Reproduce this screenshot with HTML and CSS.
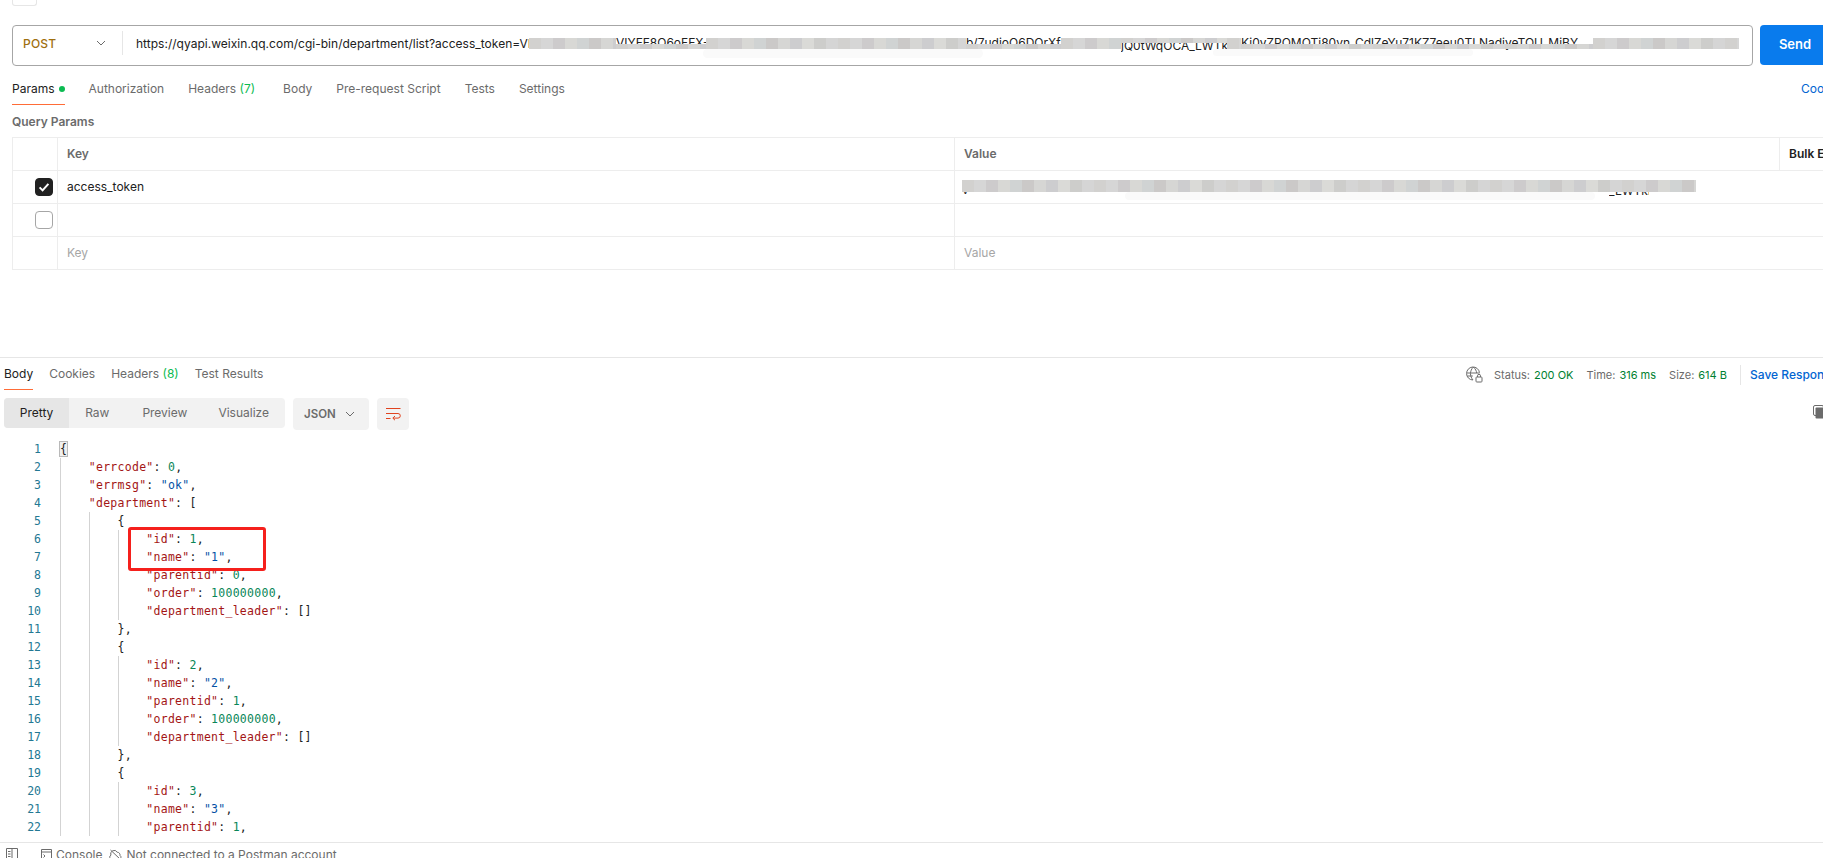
FILE: index.html
```html
<!DOCTYPE html>
<html lang="en">
<head>
<meta charset="utf-8">
<title>Postman</title>
<link rel="stylesheet" href="styles.css">
</head>
<body>
<div class="app">
  <div class="topstrip"><div class="topbox"></div></div>

  <div class="reqline">
    <div class="urlbox">
      <div class="method"><span>POST</span>
        <svg class="chev" viewBox="0 0 10 6" width="10" height="6"><path d="M1 1l4 4 4-4" fill="none" stroke="#6b6b6b" stroke-width="1"/></svg>
      </div>
      <div class="url">https://qyapi.weixin.qq.com/cgi-bin/department/list?access_token=VI</div>
      <span class="frag f1">VIYFF8O6oFEX-1</span>
      <span class="frag f2">b/7udioO6DOrXf</span>
      <span class="frag f3">jQ0tWqOCA_LWTkMq</span>
      <span class="frag f4">Ki0yZPOMOTi80vn_CdlZeYu71KZ7eeu0TLNadjyeTQU_MiBY</span>
      <div class="smear s1"></div>
      <div class="smear s2"></div>
      <div class="mos m1"></div>
      <div class="mos m1b"></div>
      <div class="mos m2"></div>
      <div class="mos m2b"></div>
      <div class="mos m3"></div>
      <div class="mos m3b"></div>
      <div class="mos m4"></div>
      <div class="mos m4b"></div>
      <div class="mos m5"></div>
    </div>
    <div class="send">Send</div>
  </div>

  <div class="tabs req-tabs">
    <div class="tab active">Params<i class="dot"></i></div>
    <div class="tab">Authorization</div>
    <div class="tab tab-wide">Headers <span class="count">(7)</span></div>
    <div class="tab">Body</div>
    <div class="tab">Pre-request Script</div>
    <div class="tab">Tests</div>
    <div class="tab">Settings</div>
    <div class="cookies">Cookies</div>
  </div>

  <div class="qp-title">Query Params</div>

  <div class="ptable">
    <div class="row">
      <div class="c c0"></div><div class="c c1 head">Key</div><div class="c c2 head">Value</div><div class="c c3 head bulk">Bulk Edit</div>
    </div>
    <div class="row">
      <div class="c c0"><span class="cb on"><svg viewBox="0 0 16 16" width="16" height="16"><path d="M3.600 8.400l3 3 5.800-6.600" fill="none" stroke="#fff" stroke-width="2"/></svg></span></div>
      <div class="c c1">access_token</div>
      <div class="c c2 val">
        <div class="smear s3"></div>
        <span class="frag f5">v</span>
        <span class="frag f6">_LWTkMq</span>
        <div class="mos m6"></div>
      </div>
      <div class="c c3"></div>
    </div>
    <div class="row">
      <div class="c c0"><span class="cb"></span></div><div class="c c1"></div><div class="c c2"></div><div class="c c3"></div>
    </div>
    <div class="row">
      <div class="c c0"></div><div class="c c1 ph">Key</div><div class="c c2 ph">Value</div><div class="c c3"></div>
    </div>
  </div>

  <div class="response">
    <div class="resp-head">
      <div class="tabs res-tabs">
        <div class="tab active">Body</div>
        <div class="tab">Cookies</div>
        <div class="tab">Headers <span class="count">(8)</span></div>
        <div class="tab">Test Results</div>
      </div>
      <div class="meta">
        <svg class="globe" viewBox="0 0 17 17" width="17" height="17" fill="none" stroke="#6b6b6b" stroke-width="1">
          <path d="M13.500 6.600A6.500 6.500 0 1 0 6.800 14"/>
          <path d="M1 7h12.500M1.400 10h5.400M7.300 1C3.600 5 3.600 10 7 14M7.300 1c2.200 2 3.200 4 3.400 6"/>
          <rect x="10" y="11" width="6" height="5" rx=".8"/>
          <path d="M11.500 11V9.800a1.500 1.500 0 0 1 3 0V11"/>
        </svg>
        <span class="mk">Status:</span><span class="mv">200 OK</span>
        <span class="mk">Time:</span><span class="mv">316 ms</span>
        <span class="mk">Size:</span><span class="mv">614 B</span>
        <span class="msep"></span>
        <span class="save">Save Response</span>
      </div>
    </div>

    <div class="toolbar">
      <div class="seg">
        <div class="seg-i on">Pretty</div>
        <div class="seg-i">Raw</div>
        <div class="seg-i prev">Preview</div>
        <div class="seg-i vis">Visualize</div>
      </div>
      <div class="fmt"><span>JSON</span>
        <svg viewBox="0 0 10 6" width="10" height="6"><path d="M1 1l4 4 4-4" fill="none" stroke="#6b6b6b" stroke-width="1"/></svg>
      </div>
      <div class="wrap">
        <svg viewBox="0 0 15 14" width="15" height="14" fill="none" stroke="#e0431f" stroke-width="1">
          <path d="M0 1.500h14.500M0 6.500h12a2.300 2.300 0 0 1 0 4.600H7M0 11.500h4.500M9 9l-2.200 2.100L9 13.200"/>
        </svg>
      </div>
      <svg class="copy" viewBox="0 0 14 14" width="14" height="14"><rect x=".5" y=".5" width="10" height="10" rx="1.500" fill="none" stroke="#6b6b6b"/><rect x="2.500" y="2.500" width="11.500" height="11" rx="1" fill="#6b6b6b"/></svg>
    </div>

    <div class="code">
      <i class="guide g1"></i><i class="guide g2"></i>
      <i class="guide g3 g3a"></i><i class="guide g3 g3b"></i><i class="guide g3 g3c"></i>
      <div class="l"><b>1</b><code><span class="match">{</span></code></div>
      <div class="l"><b>2</b><code>    <u>"errcode"</u>: <s>0</s>,</code></div>
      <div class="l"><b>3</b><code>    <u>"errmsg"</u>: <em>"ok"</em>,</code></div>
      <div class="l"><b>4</b><code>    <u>"department"</u>: [</code></div>
      <div class="l"><b>5</b><code>        {</code></div>
      <div class="l"><b>6</b><code>            <u>"id"</u>: <s>1</s>,</code></div>
      <div class="l"><b>7</b><code>            <u>"name"</u>: <em>"1"</em>,</code></div>
      <div class="l"><b>8</b><code>            <u>"parentid"</u>: <s>0</s>,</code></div>
      <div class="l"><b>9</b><code>            <u>"order"</u>: <s>100000000</s>,</code></div>
      <div class="l"><b>10</b><code>            <u>"department_leader"</u>: []</code></div>
      <div class="l"><b>11</b><code>        },</code></div>
      <div class="l"><b>12</b><code>        {</code></div>
      <div class="l"><b>13</b><code>            <u>"id"</u>: <s>2</s>,</code></div>
      <div class="l"><b>14</b><code>            <u>"name"</u>: <em>"2"</em>,</code></div>
      <div class="l"><b>15</b><code>            <u>"parentid"</u>: <s>1</s>,</code></div>
      <div class="l"><b>16</b><code>            <u>"order"</u>: <s>100000000</s>,</code></div>
      <div class="l"><b>17</b><code>            <u>"department_leader"</u>: []</code></div>
      <div class="l"><b>18</b><code>        },</code></div>
      <div class="l"><b>19</b><code>        {</code></div>
      <div class="l"><b>20</b><code>            <u>"id"</u>: <s>3</s>,</code></div>
      <div class="l"><b>21</b><code>            <u>"name"</u>: <em>"3"</em>,</code></div>
      <div class="l"><b>22</b><code>            <u>"parentid"</u>: <s>1</s>,</code></div>
      <div class="redbox"></div>
    </div>
  </div>

  <div class="footer">
    <svg class="fi-side" viewBox="0 0 12 13" width="12" height="13" fill="none" stroke="#6b6b6b"><path d="M.5.500h11v12h-11zM6 .5v12M2 3.500h2.500M2 6h2.500M2 8.500h2.500"/></svg>
    <svg class="fi-con" viewBox="0 0 11 12" width="11" height="12" fill="none" stroke="#6b6b6b"><path d="M.5.500h10v11h-10zM.5 3h10M2.500 5.500l1.500 1.500-1.500 1.500M5 9.500h2"/></svg>
    <span class="ft ft-con">Console</span>
    <svg class="fi-cloud" viewBox="0 0 13 11" width="13" height="11" fill="none" stroke="#6b6b6b"><path d="M3 10H2.500a2 2 0 0 1-.6-3.800 3.500 3.500 0 0 1 6.300-3A2.800 2.800 0 0 1 11 6.500 1.900 1.900 0 0 1 10.500 10zM1.500 1l10 9.500"/></svg>
    <span class="ft">Not connected to a Postman account</span>
  </div>
</div>
</body>
</html>
```

FILE: styles.css
```css
* { box-sizing: border-box; }
html, body { margin: 0; padding: 0; background: #fff; }
body { font-family: Inter, "Liberation Sans", sans-serif; font-size: 12px; color: #212121; overflow: hidden; }
.app { width: 1823px; height: 858px; overflow: hidden; display: flex; flex-direction: column; }

.topstrip { height: 25px; flex: none; padding-left: 12px; }
.topbox { width: 25px; height: 6px; border: 1px solid #e6e6e6; border-top: 0; border-radius: 0 0 3px 3px; }

.reqline { height: 40px; flex: none; display: flex; gap: 7px; padding-left: 12px; }
.urlbox { position: relative; flex: none; width: 1741px; height: 41px; border: 1px solid #a6a6a6; border-radius: 4px; display: flex; align-items: center; padding-bottom: 5px; }
.method { width: 110px; height: 24px; flex: none; display: flex; align-items: center; justify-content: space-between; padding: 0 16px 0 10px; border-right: 1px solid #e6e6e6; color: #a0700f; font-weight: 500; font-size: 12px; letter-spacing: .2px; }
.url { padding-left: 13px; color: #212121; white-space: nowrap; font-size: 12px; letter-spacing: .02px; }

.frag { position: absolute; top: 10px; color: #212121; white-space: nowrap; overflow: hidden; font-size: 12px; line-height: 14px; }
.f1 { left: 603px; width: 90px; }
.f2 { left: 953px; width: 95px; }
.f3 { left: 1108px; width: 106px; top: 13px; }
.f4 { left: 1228px; width: 352px; }
.f5 { left: 7px; top: 12px; width: 6px; }
.f6 { left: 654px; top: 13px; width: 40px; }

.mos { position: absolute; top: 12px; height: 11px;
  background: repeating-linear-gradient(90deg, #d2d1cf 0 12px, #d6d6d6 12px 24px, #cdcbcc 24px 36px, #d8d8d5 36px 48px, #d0d3d3 48px 60px, #cbc9c8 60px 72px, #d6d6d4 72px 84px, #cdcdcf 84px 96px, #dadad7 96px 108px, #cdcdcb 108px 120px, #d5d5d5 120px 132px); }
.m1 { left: 516px; width: 87px; }
.m1b { left: 603px; width: 90px; top: 18px; height: 5px; }
.m2 { left: 693px; width: 260px; }
.m2b { left: 953px; width: 95px; top: 18px; height: 5px; }
.m3 { left: 1048px; width: 60px; }
.m3b { left: 1108px; width: 106px; height: 5px; }
.m4 { left: 1214px; width: 14px; }
.m4b { left: 1228px; width: 352px; top: 18px; height: 5px; }
.m5 { left: 1580px; width: 146px; }
.m6 { left: 7px; top: 9px; width: 734px; height: 12px; }
.smear { position: absolute; background: #fafafa; border-radius: 8px; }
.s1 { left: 690px; top: 23px; width: 280px; height: 9px; }
.s2 { left: 1200px; top: 23px; width: 260px; height: 7px; }
.s3 { left: 170px; top: 21px; width: 470px; height: 8px; }

.send { width: 70px; height: 40px; flex: none; background: #097bed; color: #fff; border-radius: 4px; display: flex; align-items: center; justify-content: center; font-weight: 600; font-size: 13px; padding-bottom: 2px; }

.tabs { display: flex; flex: none; }
.tab { color: #6b6b6b; line-height: 16px; white-space: nowrap; position: relative; }
.tab.active { color: #212121; }
.tab.active::after { content: ""; position: absolute; left: 0; right: 0; height: 1px; background: #ff6c37; }
.count { color: #0cbb52; }
.req-tabs { height: 40px; padding: 16px 0 0 12px; gap: 24px; position: relative; }
.req-tabs .tab.active::after { top: 23px; }
.tab-wide { margin-right: 4px; }
.dot { display: inline-block; width: 6px; height: 6px; margin-left: 4px; border-radius: 50%; background: #0cbb52; vertical-align: 1px; }
.cookies { position: absolute; left: 1801px; top: 16px; line-height: 16px; color: #0265d2; }

.qp-title { height: 32px; flex: none; padding: 9px 0 0 12px; font-weight: 600; color: #6b6b6b; line-height: 16px; }

.ptable { flex: none; margin-left: 12px; border-left: 1px solid #ededed; border-top: 1px solid #ededed; }
.row { display: grid; grid-template-columns: 45px 897px 825px 60px; height: 33px; border-bottom: 1px solid #ededed; width: 1827px; }
.c { border-right: 1px solid #ededed; display: flex; align-items: center; padding: 0 0 2px 9px; white-space: nowrap; overflow: hidden; position: relative; color: #212121; }
.c0 { padding: 0 0 0 22px; }
.c3 { border-right: 0; }
.c.head { font-weight: 600; color: #6b6b6b; }
.c.bulk { color: #212121; }
.c.ph { color: #a6a6a6; }
.row + .row .c2 { border-right: 0; }
.cb { width: 18px; height: 18px; border: 1px solid #a6a6a6; border-radius: 4px; display: block; }
.cb.on { background: #212121; border-color: #212121; }
.cb.on svg { display: block; }

.response { flex: none; margin-top: 87px; height: 485px; border-top: 1px solid #e6e6e6; position: relative; display: flex; flex-direction: column; }
.resp-head { height: 40px; flex: none; display: flex; justify-content: space-between; }
.res-tabs { padding: 8px 0 0 4px; gap: 16px; }
.res-tabs .tab.active::after { top: 23px; }
.meta { position: relative; width: 357px; flex: none; display: flex; align-items: center; height: 33px; color: #6b6b6b; font-size: 11px; white-space: nowrap; }
.globe { margin-right: 11px; flex: none; }
.mk { margin-right: 4px; }
.mv { color: #007f31; margin-right: 13px; }
.msep { width: 1px; height: 20px; background: #e6e6e6; margin-right: 9px; flex: none; }
.save { color: #0265d2; font-size: 12px; font-weight: 500; }

.toolbar { height: 42px; flex: none; display: flex; gap: 8px; padding-left: 4px; position: relative; align-items: flex-start; }
.seg { display: flex; width: 281px; height: 30px; background: #f2f2f2; border-radius: 4px; color: #6b6b6b; line-height: 30px; }
.seg-i { padding: 0 16px; }
.seg-i.on { width: 66px; background: #e6e6e6; color: #212121; border-radius: 4px 0 0 4px; text-align: center; padding: 0; }
.seg-i.prev { padding-left: 17px; }
.seg-i.vis { padding-left: 15px; }
.fmt { width: 76px; height: 32px; background: #f2f2f2; border-radius: 4px; display: flex; align-items: center; justify-content: space-between; padding: 0 14px 0 11px; color: #6b6b6b; font-weight: 600; font-size: 11.500px; }
.wrap { width: 32px; height: 32px; background: #f2f2f2; border-radius: 4px; display: flex; align-items: center; justify-content: center; }
.copy { position: absolute; left: 1813px; top: 7px; }

.code { flex: 1; position: relative; overflow: hidden; font-family: "DejaVu Sans Mono", "Liberation Mono", monospace; font-size: 11.500px; }
.l { height: 18px; line-height: 18px; display: flex; white-space: pre; }
.l b { width: 41px; flex: none; text-align: right; font-weight: 400; color: #237893; }
.l code { font: inherit; margin-left: 19px; color: #212121; letter-spacing: .27px; }
.l u { text-decoration: none; color: #a31515; }
.l s { text-decoration: none; color: #098658; }
.l em { font-style: normal; color: #0451a5; }
.match { background: #f0f0f0; outline: 1px solid #b9b9b9; }
.guide { position: absolute; width: 1px; background: #d3d3d3; }
.g1 { left: 60px; top: 18px; bottom: 6px; }
.g2 { left: 89px; top: 72px; bottom: 6px; }
.g3 { left: 118px; }
.g3a { top: 90px; height: 90px; }
.g3b { top: 216px; height: 90px; }
.g3c { top: 342px; bottom: 6px; }
.redbox { position: absolute; left: 128px; top: 87px; width: 138px; height: 44px; border: 3px solid #f5201c; border-radius: 3px; }

.footer { flex: none; height: 17px; border-top: 1px solid #e6e6e6; display: flex; align-items: flex-start; padding: 4px 0 0 6px; color: #6b6b6b; white-space: nowrap; line-height: 16px; }
.footer svg { flex: none; }
.fi-side { margin-right: 23px; margin-top: 1px; }
.fi-con { margin-right: 4px; margin-top: 2px; }
.ft-con { margin-right: 7px; }
.fi-cloud { margin-right: 4px; margin-top: 2px; }
```
